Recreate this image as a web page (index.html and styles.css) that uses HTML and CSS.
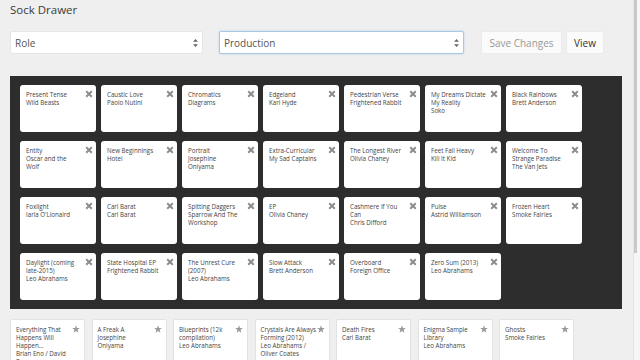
FILE: index.html
```html
<!DOCTYPE html>
<html>
<head>
<meta charset="utf-8">
<title>Sock Drawer</title>
<link rel="stylesheet" href="styles.css">
</head>
<body>
<div class="page">
  <h1 class="title">Sock Drawer</h1>
  <div class="controls">
    <div class="select select-role">
      <span>Role</span>
      <svg class="arrows" viewBox="0 0 6 10" width="5" height="8"><path d="M3 0 L6 3.5 H0 Z M3 10 L0 6.5 H6 Z" fill="#666"/></svg>
    </div>
    <div class="select select-focus">
      <span>Production</span>
      <svg class="arrows" viewBox="0 0 6 10" width="5" height="8"><path d="M3 0 L6 3.5 H0 Z M3 10 L0 6.5 H6 Z" fill="#666"/></svg>
    </div>
    <button class="btn btn-disabled">Save Changes</button>
    <button class="btn">View</button>
  </div>

  <div class="drawer">
    <div class="card"><div>Present Tense</div><div>Wild Beasts</div><svg class="x" viewBox="0 0 10 10"><path d="M1.5 1.5 L8.5 8.5 M8.5 1.5 L1.5 8.5"/></svg></div>
    <div class="card"><div>Caustic Love</div><div>Paolo Nutini</div><svg class="x" viewBox="0 0 10 10"><path d="M1.5 1.5 L8.5 8.5 M8.5 1.5 L1.5 8.5"/></svg></div>
    <div class="card"><div>Chromatics</div><div>Diagrams</div><svg class="x" viewBox="0 0 10 10"><path d="M1.5 1.5 L8.5 8.5 M8.5 1.5 L1.5 8.5"/></svg></div>
    <div class="card"><div>Edgeland</div><div>Karl Hyde</div><svg class="x" viewBox="0 0 10 10"><path d="M1.5 1.5 L8.5 8.5 M8.5 1.5 L1.5 8.5"/></svg></div>
    <div class="card"><div>Pedestrian Verse</div><div>Frightened Rabbit</div><svg class="x" viewBox="0 0 10 10"><path d="M1.5 1.5 L8.5 8.5 M8.5 1.5 L1.5 8.5"/></svg></div>
    <div class="card"><div>My Dreams Dictate<br>My Reality</div><div>Soko</div><svg class="x" viewBox="0 0 10 10"><path d="M1.5 1.5 L8.5 8.5 M8.5 1.5 L1.5 8.5"/></svg></div>
    <div class="card"><div>Black Rainbows</div><div>Brett Anderson</div><svg class="x" viewBox="0 0 10 10"><path d="M1.5 1.5 L8.5 8.5 M8.5 1.5 L1.5 8.5"/></svg></div>

    <div class="card"><div>Entity</div><div>Oscar and the<br>Wolf</div><svg class="x" viewBox="0 0 10 10"><path d="M1.5 1.5 L8.5 8.5 M8.5 1.5 L1.5 8.5"/></svg></div>
    <div class="card"><div>New Beginnings</div><div>Hotei</div><svg class="x" viewBox="0 0 10 10"><path d="M1.5 1.5 L8.5 8.5 M8.5 1.5 L1.5 8.5"/></svg></div>
    <div class="card"><div>Portrait</div><div>Josephine<br>Oniyama</div><svg class="x" viewBox="0 0 10 10"><path d="M1.5 1.5 L8.5 8.5 M8.5 1.5 L1.5 8.5"/></svg></div>
    <div class="card"><div>Extra-Curricular</div><div>My Sad Captains</div><svg class="x" viewBox="0 0 10 10"><path d="M1.5 1.5 L8.5 8.5 M8.5 1.5 L1.5 8.5"/></svg></div>
    <div class="card"><div>The Longest River</div><div>Olivia Chaney</div><svg class="x" viewBox="0 0 10 10"><path d="M1.5 1.5 L8.5 8.5 M8.5 1.5 L1.5 8.5"/></svg></div>
    <div class="card"><div>Feet Fall Heavy</div><div>Kill It Kid</div><svg class="x" viewBox="0 0 10 10"><path d="M1.5 1.5 L8.5 8.5 M8.5 1.5 L1.5 8.5"/></svg></div>
    <div class="card"><div>Welcome To<br>Strange Paradise</div><div>The Van Jets</div><svg class="x" viewBox="0 0 10 10"><path d="M1.5 1.5 L8.5 8.5 M8.5 1.5 L1.5 8.5"/></svg></div>

    <div class="card"><div>Foxlight</div><div>Iarla O'Lionaird</div><svg class="x" viewBox="0 0 10 10"><path d="M1.5 1.5 L8.5 8.5 M8.5 1.5 L1.5 8.5"/></svg></div>
    <div class="card"><div>Carl Barat</div><div>Carl Barat</div><svg class="x" viewBox="0 0 10 10"><path d="M1.5 1.5 L8.5 8.5 M8.5 1.5 L1.5 8.5"/></svg></div>
    <div class="card"><div>Spitting Daggers</div><div>Sparrow And The<br>Workshop</div><svg class="x" viewBox="0 0 10 10"><path d="M1.5 1.5 L8.5 8.5 M8.5 1.5 L1.5 8.5"/></svg></div>
    <div class="card"><div>EP</div><div>Olivia Chaney</div><svg class="x" viewBox="0 0 10 10"><path d="M1.5 1.5 L8.5 8.5 M8.5 1.5 L1.5 8.5"/></svg></div>
    <div class="card"><div>Cashmere If You<br>Can</div><div>Chris Difford</div><svg class="x" viewBox="0 0 10 10"><path d="M1.5 1.5 L8.5 8.5 M8.5 1.5 L1.5 8.5"/></svg></div>
    <div class="card"><div>Pulse</div><div>Astrid Williamson</div><svg class="x" viewBox="0 0 10 10"><path d="M1.5 1.5 L8.5 8.5 M8.5 1.5 L1.5 8.5"/></svg></div>
    <div class="card"><div>Frozen Heart</div><div>Smoke Fairies</div><svg class="x" viewBox="0 0 10 10"><path d="M1.5 1.5 L8.5 8.5 M8.5 1.5 L1.5 8.5"/></svg></div>

    <div class="card"><div>Daylight (coming<br>late-2015)</div><div>Leo Abrahams</div><svg class="x" viewBox="0 0 10 10"><path d="M1.5 1.5 L8.5 8.5 M8.5 1.5 L1.5 8.5"/></svg></div>
    <div class="card"><div>State Hospital EP</div><div>Frightened Rabbit</div><svg class="x" viewBox="0 0 10 10"><path d="M1.5 1.5 L8.5 8.5 M8.5 1.5 L1.5 8.5"/></svg></div>
    <div class="card"><div>The Unrest Cure<br>(2007)</div><div>Leo Abrahams</div><svg class="x" viewBox="0 0 10 10"><path d="M1.5 1.5 L8.5 8.5 M8.5 1.5 L1.5 8.5"/></svg></div>
    <div class="card"><div>Slow Attack</div><div>Brett Anderson</div><svg class="x" viewBox="0 0 10 10"><path d="M1.5 1.5 L8.5 8.5 M8.5 1.5 L1.5 8.5"/></svg></div>
    <div class="card"><div>Overboard</div><div>Foreign Office</div><svg class="x" viewBox="0 0 10 10"><path d="M1.5 1.5 L8.5 8.5 M8.5 1.5 L1.5 8.5"/></svg></div>
    <div class="card"><div>Zero Sum (2013)</div><div>Leo Abrahams</div><svg class="x" viewBox="0 0 10 10"><path d="M1.5 1.5 L8.5 8.5 M8.5 1.5 L1.5 8.5"/></svg></div>
  </div>

  <div class="library">
    <div class="lcard"><div>Everything That<br>Happens Will<br>Happen...</div><div>Brian Eno / David<br>Byrne</div><svg class="star" viewBox="0 0 10 10"><path d="M5 0.3 L6.2 3.7 L9.8 3.8 L7 6 L8 9.6 L5 7.5 L2 9.6 L3 6 L0.2 3.8 L3.8 3.7 Z"/></svg></div>
    <div class="lcard"><div>A Freak A</div><div>Josephine<br>Oniyama</div><svg class="star" viewBox="0 0 10 10"><path d="M5 0.3 L6.2 3.7 L9.8 3.8 L7 6 L8 9.6 L5 7.5 L2 9.6 L3 6 L0.2 3.8 L3.8 3.7 Z"/></svg></div>
    <div class="lcard"><div>Blueprints (12k<br>compilation)</div><div>Leo Abrahams</div><svg class="star" viewBox="0 0 10 10"><path d="M5 0.3 L6.2 3.7 L9.8 3.8 L7 6 L8 9.6 L5 7.5 L2 9.6 L3 6 L0.2 3.8 L3.8 3.7 Z"/></svg></div>
    <div class="lcard"><div>Crystals Are Always<br>Forming (2012)</div><div>Leo Abrahams /<br>Oliver Coates</div><svg class="star" viewBox="0 0 10 10"><path d="M5 0.3 L6.2 3.7 L9.8 3.8 L7 6 L8 9.6 L5 7.5 L2 9.6 L3 6 L0.2 3.8 L3.8 3.7 Z"/></svg></div>
    <div class="lcard"><div>Death Fires</div><div>Carl Barat</div><svg class="star" viewBox="0 0 10 10"><path d="M5 0.3 L6.2 3.7 L9.8 3.8 L7 6 L8 9.6 L5 7.5 L2 9.6 L3 6 L0.2 3.8 L3.8 3.7 Z"/></svg></div>
    <div class="lcard"><div>Enigma Sample<br>Library</div><div>Leo Abrahams</div><svg class="star" viewBox="0 0 10 10"><path d="M5 0.3 L6.2 3.7 L9.8 3.8 L7 6 L8 9.6 L5 7.5 L2 9.6 L3 6 L0.2 3.8 L3.8 3.7 Z"/></svg></div>
    <div class="lcard"><div>Ghosts</div><div>Smoke Fairies</div><svg class="star" viewBox="0 0 10 10"><path d="M5 0.3 L6.2 3.7 L9.8 3.8 L7 6 L8 9.6 L5 7.5 L2 9.6 L3 6 L0.2 3.8 L3.8 3.7 Z"/></svg></div>
  </div>
</div>
<div class="scrollbar"><div class="thumb"></div></div>
</body>
</html>
```

FILE: styles.css
```css
html, body {
  margin: 0;
  padding: 0;
  height: 100%;
  overflow: hidden;
}
body {
  background: #efefef;
  font-family: "Open Sans", "Liberation Sans", sans-serif;
  color: #333;
  position: relative;
}
.page {
  padding: 0 10px;
  width: 612px;
}
.title {
  margin: 0;
  padding-top: 2px;
  height: 16px;
  line-height: 16px;
  font-size: 11.5px;
  font-weight: 400;
  color: #3a3a3a;
}
.controls {
  margin-top: 13px;
  display: flex;
  align-items: stretch;
  height: 23px;
}
.select {
  box-sizing: border-box;
  background: #fff;
  border: 1px solid #e6e6e6;
  border-radius: 2px;
  display: flex;
  align-items: center;
  justify-content: space-between;
  padding: 0 4px 0 4px;
  font-size: 10px;
  color: #555;
}
.select-role {
  width: 193px;
}
.select-focus {
  width: 245px;
  margin-left: 16px;
  border-color: #a9c8e6;
  box-shadow: 0 0 2px rgba(102, 160, 220, 0.45);
}
.arrows {
  display: block;
}
.btn {
  box-sizing: border-box;
  font-family: inherit;
  font-size: 10px;
  color: #333;
  background: #fbfbfb;
  border: 1px solid #ebebeb;
  border-radius: 2px;
  padding: 0;
  height: 23px;
}
.btn-disabled {
  width: 81px;
  margin-left: 17px;
  color: #999;
}
.btn:last-child {
  width: 38px;
  margin-left: 4px;
}
.drawer {
  margin-top: 22px;
  box-sizing: border-box;
  height: 233px;
  background: #2d2d2d;
  padding: 9px 10px 10px;
  display: flex;
  flex-wrap: wrap;
  align-content: flex-start;
  column-gap: 5px;
  row-gap: 9px;
}
.card {
  position: relative;
  box-sizing: border-box;
  width: 76px;
  height: 47px;
  background: #fff;
  border-radius: 3px;
  padding: 6px 10px 0 6px;
  font-size: 6.2px;
  line-height: 8px;
  color: #444;
  white-space: nowrap;
}
.x {
  position: absolute;
  top: 5px;
  right: 3px;
  width: 8px;
  height: 8px;
  fill: none;
  stroke: #8c8c8c;
  stroke-width: 2.4;
}
.library {
  margin-top: 10px;
  display: flex;
  column-gap: 6.5px;
}
.lcard {
  position: relative;
  box-sizing: border-box;
  width: 75px;
  height: 60px;
  flex: none;
  background: #fff;
  border: 1px solid #e2e2e2;
  border-radius: 2px;
  padding: 6px 10px 0 5px;
  font-size: 6.2px;
  line-height: 8px;
  color: #444;
  white-space: nowrap;
}
.star {
  position: absolute;
  top: 5px;
  right: 4px;
  width: 8px;
  height: 8px;
  fill: #9a9a9a;
}
.scrollbar {
  position: absolute;
  top: 0;
  right: 0;
  width: 6px;
  height: 100%;
  background: #f6f6f6;
  border-left: 1px solid #e4e4e4;
}
.thumb {
  width: 3px;
  height: 253px;
  background: #c9c9c9;
}
```
